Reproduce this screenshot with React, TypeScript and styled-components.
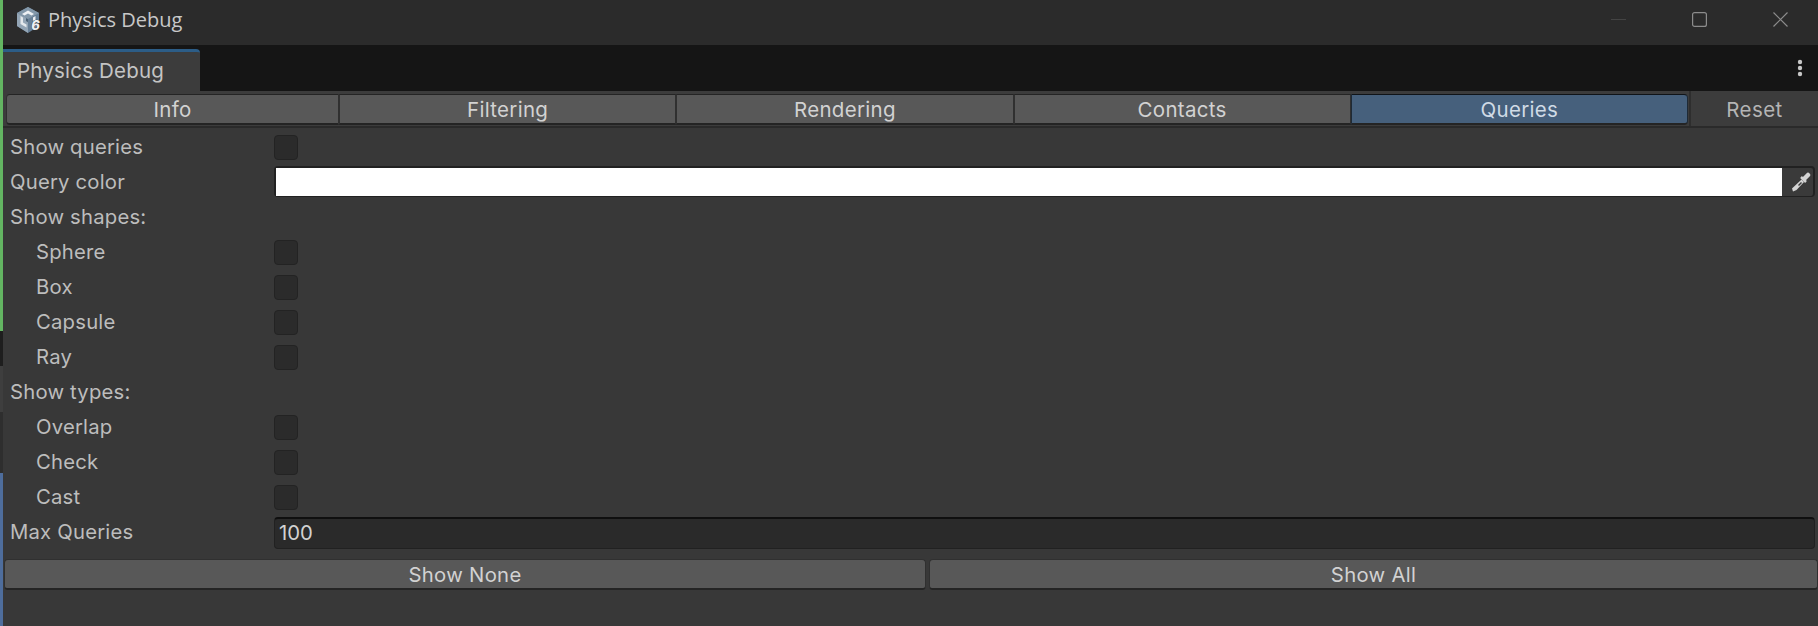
import React from "react";
import styled, { createGlobalStyle } from "styled-components";

const GlobalStyle = createGlobalStyle`
  html, body {
    margin: 0;
    padding: 0;
    width: 1818px;
    height: 626px;
    overflow: hidden;
    background: #383838;
  }
  * {
    box-sizing: border-box;
  }
`;

const Page = styled.div`
  width: 1818px;
  height: 626px;
  display: flex;
  overflow: hidden;
  font-family: Inter, "Noto Sans", sans-serif;
  color: #c4c4c4;
`;

const DesktopEdge = styled.div`
  width: 3px;
  flex: none;
  display: flex;
  flex-direction: column;
`;

const EdgeSegment = styled.div<{ $height: number; $color: string }>`
  height: ${(p) => p.$height}px;
  background: ${(p) => p.$color};
`;

const Window = styled.div`
  flex: 1;
  min-width: 0;
  display: flex;
  flex-direction: column;
`;

const TitleBar = styled.div`
  height: 45px;
  flex: none;
  display: flex;
  align-items: center;
  background: #2b2b2b;
  padding: 0 0 6px 14px;
`;

const TitleText = styled.span`
  font-family: "Open Sans", Inter, sans-serif;
  font-size: 20px;
  color: #c8c8c8;
  margin-left: 5px;
`;

const WindowButtons = styled.div`
  margin-left: auto;
  display: flex;
  align-items: center;
  padding-right: 30px;
  gap: 66px;
`;

const DockBar = styled.div`
  height: 46px;
  flex: none;
  display: flex;
  background: #151515;
  padding-top: 4px;
`;

const DockTab = styled.div`
  width: 197px;
  background: #3c3c3c;
  border-top: 3px solid #2c5d87;
  border-top-right-radius: 4px;
  font-size: 20.5px;
  letter-spacing: 0.2px;
  color: #c4c4c4;
  padding: 0 0 2px 14px;
  display: flex;
  align-items: center;
`;

const DockMenu = styled.div`
  margin-left: auto;
  width: 36px;
  display: flex;
  align-items: center;
  justify-content: center;
  padding-bottom: 4px;
`;

const Toolbar = styled.div`
  height: 37px;
  flex: none;
  display: flex;
  background: #3c3c3c;
  border-bottom: 2px solid #2a2a2a;
  padding: 3px 0 0 3px;
`;

const TabStrip = styled.div`
  flex: 1;
  display: flex;
  height: 31px;
  min-width: 0;
`;

const Tab = styled.div<{ $active?: boolean }>`
  flex: 1;
  display: flex;
  align-items: center;
  justify-content: center;
  padding-top: 1px;
  font-size: 20.5px;
  letter-spacing: 0.3px;
  color: ${(p) => (p.$active ? "#d0dbe6" : "#d2d2d2")};
  background: ${(p) => (p.$active ? "#46607c" : "#585858")};
  border: 1px solid ${(p) => (p.$active ? "#1e2a36" : "#303030")};
  border-top-color: ${(p) => (p.$active ? "#101418" : "#242424")};
  border-bottom: 2px solid #242424;
  &:first-child {
    flex: 0 0 333px;
    border-radius: 4px 0 0 4px;
  }
  &:last-child {
    border-radius: 0 4px 4px 0;
  }
`;

const ResetButton = styled.div`
  width: 129px;
  flex: none;
  display: flex;
  align-items: center;
  justify-content: center;
  padding-top: 2px;
  font-size: 20.5px;
  letter-spacing: 0.4px;
  color: #b4b4b4;
  border-left: 2px solid #2e2e2e;
  margin-left: 1px;
  margin-top: -3px;
`;

const Content = styled.div`
  flex: 1;
  background: #383838;
  display: flex;
  flex-direction: column;
  padding: 0 3px;
  min-height: 0;
`;

const Rows = styled.div`
  display: flex;
  flex-direction: column;
  padding-top: 2px;
`;

const Row = styled.div`
  height: 35px;
  display: flex;
  align-items: center;
`;

const Label = styled.div<{ $indent?: boolean }>`
  width: 268px;
  flex: none;
  font-size: 20.3px;
  letter-spacing: 0.2px;
  color: #bdbdbd;
  padding-left: ${(p) => (p.$indent ? "30px" : "4px")};
  padding-bottom: 2px;
`;

const Checkbox = styled.div`
  width: 24px;
  height: 25px;
  background: #2b2b2b;
  border: 1px solid #232323;
  border-radius: 4px;
`;

const ColorField = styled.div`
  flex: 1;
  height: 31px;
  margin-bottom: 2px;
  display: flex;
  background: #3a3a3a;
  border: 2px solid #212121;
  border-bottom-width: 1px;
  border-radius: 4px;
`;

const ColorSwatch = styled.div`
  flex: 1;
  background: #ffffff;
`;

const EyeDropper = styled.div`
  width: 31px;
  display: flex;
  align-items: center;
  justify-content: flex-end;
  padding-right: 2px;
`;

const NumberField = styled.div`
  flex: 1;
  height: 32px;
  background: #2a2a2a;
  border: 1px solid #212121;
  border-top: 2px solid #0f0f0f;
  border-radius: 4px;
  font-size: 20.3px;
  color: #d2d2d2;
  display: flex;
  align-items: center;
  padding: 0 0 1px 4px;
`;

const ActionRow = styled.div`
  display: flex;
  gap: 3px;
  margin: 9px -3px 0 -2px;
`;

const ActionButton = styled.div`
  flex: 1;
  height: 31px;
  background: #585858;
  border: 1px solid #303030;
  border-bottom: 2px solid #242424;
  border-radius: 4px;
  font-size: 20.3px;
  letter-spacing: 0.3px;
  color: #d2d2d2;
  display: flex;
  align-items: center;
  justify-content: center;
  &:first-child {
    flex: 0 0 922px;
  }
`;

const UnityLogo = () => (
  <svg width="26" height="26" viewBox="0 0 26 26">
    <path d="M11 0l11 6v13l-11 7L0 19V6z" fill="#667f96" />
    <path d="M11 0l11 6-11 6L0 6z" fill="#8398aa" />
    <path d="M11 12v14L0 19V6z" fill="#93a5b5" />
    <path d="M11 3.500l6 3.500-2.500 1.500L11 6.500 7.500 8.500 5 7z" fill="#eef1f4" />
    <path d="M3.500 9l2.500 1.500v5l3.500 2v3L3.500 17z" fill="#e3e8ec" />
    <path d="M18.500 9v4l-2.500 1v-3.500z" fill="#eef1f4" />
    <path d="M9 11l2 1.200v3L9 14z" fill="#4a6074" />
    <text
      x="18.500"
      y="23"
      fontSize="13"
      fontWeight="800"
      fontStyle="italic"
      textAnchor="middle"
      fontFamily="Inter, sans-serif"
      fill="#eceff2"
      stroke="#2b2b2b"
      strokeWidth="0.600"
      paintOrder="stroke"
    >
      6
    </text>
  </svg>
);

const MinimizeIcon = () => (
  <svg width="15" height="15" viewBox="0 0 15 15">
    <path d="M0 7.500h15" stroke="#444444" strokeWidth="1" />
  </svg>
);

const MaximizeIcon = () => (
  <svg width="15" height="15" viewBox="0 0 15 15">
    <rect x="0.600" y="0.600" width="13.800" height="13.800" rx="2" fill="none" stroke="#8c8c8c" strokeWidth="1.200" />
  </svg>
);

const CloseIcon = () => (
  <svg width="15" height="15" viewBox="0 0 15 15">
    <path d="M0.500 0.500l14 14M14.500 0.500l-14 14" stroke="#8c8c8c" strokeWidth="1.200" />
  </svg>
);

const DotsIcon = () => (
  <svg width="6" height="18" viewBox="0 0 6 18">
    <circle cx="3" cy="3" r="2.200" fill="#c8c8c8" />
    <circle cx="3" cy="9" r="2.200" fill="#c8c8c8" />
    <circle cx="3" cy="15" r="2.200" fill="#c8c8c8" />
  </svg>
);

const EyeDropperIcon = () => (
  <svg width="20" height="20" viewBox="0 0 20 20">
    <path d="M13.500 6.500l3.500-3.500" stroke="#d4d4d4" strokeWidth="4.500" strokeLinecap="round" />
    <path d="M10 5l5 5" stroke="#d4d4d4" strokeWidth="2.500" />
    <path d="M10.500 7.500l2.500 2.500-7.500 8L2 19.500 1 16.500z" fill="#d4d4d4" />
    <path d="M10.500 10.500l-3 3" stroke="#3a3a3a" strokeWidth="1.500" />
  </svg>
);

const tabs = ["Info", "Filtering", "Rendering", "Contacts", "Queries"];

const checkRows = {
  top: ["Show queries"],
  shapes: ["Sphere", "Box", "Capsule", "Ray"],
  types: ["Overlap", "Check", "Cast"],
};

const edgeSegments = [
  { height: 331, color: "#63b562" },
  { height: 35, color: "#1e1e1e" },
  { height: 46, color: "#3e3e3e" },
  { height: 61, color: "#2e2e2e" },
  { height: 153, color: "#4e6d9c" },
];

export default function App() {
  return (
    <Page>
      <GlobalStyle />
      <DesktopEdge>
        {edgeSegments.map((s) => (
          <EdgeSegment key={s.color} $height={s.height} $color={s.color} />
        ))}
      </DesktopEdge>
      <Window>
        <TitleBar>
          <UnityLogo />
          <TitleText>Physics Debug</TitleText>
          <WindowButtons>
            <MinimizeIcon />
            <MaximizeIcon />
            <CloseIcon />
          </WindowButtons>
        </TitleBar>
        <DockBar>
          <DockTab>Physics Debug</DockTab>
          <DockMenu>
            <DotsIcon />
          </DockMenu>
        </DockBar>
        <Toolbar>
          <TabStrip>
            {tabs.map((t) => (
              <Tab key={t} $active={t === "Queries"}>
                {t}
              </Tab>
            ))}
          </TabStrip>
          <ResetButton>Reset</ResetButton>
        </Toolbar>
        <Content>
          <Rows>
            {checkRows.top.map((r) => (
              <Row key={r}>
                <Label>{r}</Label>
                <Checkbox />
              </Row>
            ))}
            <Row>
              <Label>Query color</Label>
              <ColorField>
                <ColorSwatch />
                <EyeDropper>
                  <EyeDropperIcon />
                </EyeDropper>
              </ColorField>
            </Row>
            <Row>
              <Label>Show shapes:</Label>
            </Row>
            {checkRows.shapes.map((s) => (
              <Row key={s}>
                <Label $indent>{s}</Label>
                <Checkbox />
              </Row>
            ))}
            <Row>
              <Label>Show types:</Label>
            </Row>
            {checkRows.types.map((s) => (
              <Row key={s}>
                <Label $indent>{s}</Label>
                <Checkbox />
              </Row>
            ))}
            <Row>
              <Label>Max Queries</Label>
              <NumberField>100</NumberField>
            </Row>
          </Rows>
          <ActionRow>
            <ActionButton>Show None</ActionButton>
            <ActionButton>Show All</ActionButton>
          </ActionRow>
        </Content>
      </Window>
    </Page>
  );
}
